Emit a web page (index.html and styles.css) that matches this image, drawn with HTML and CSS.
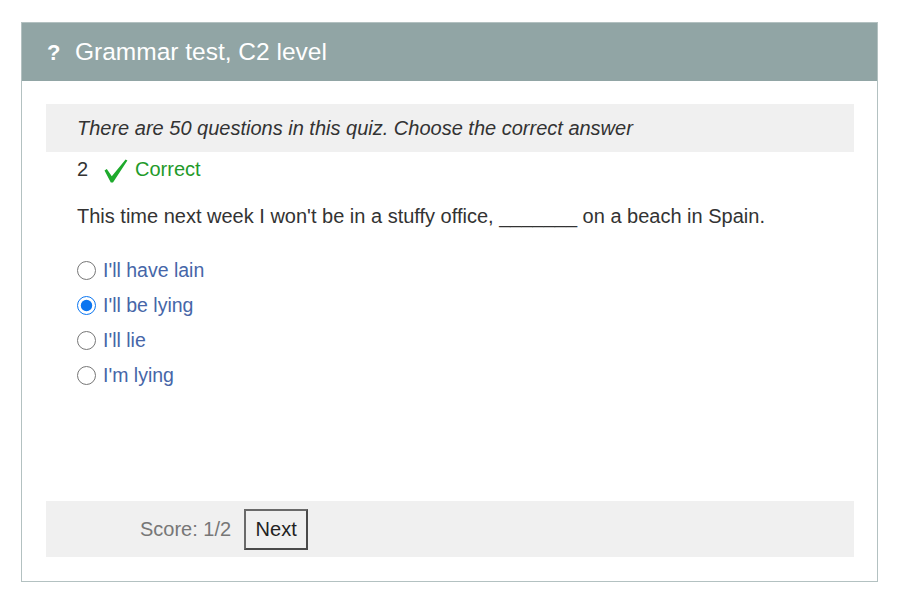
FILE: index.html
```html
<!DOCTYPE html>
<html lang="en">
<head>
<meta charset="utf-8">
<title>Grammar test, C2 level</title>
<link rel="stylesheet" href="styles.css">
</head>
<body>
<div class="card">
  <div class="card-header">
    <span class="q-icon">?</span>
    <span class="title">Grammar test, C2 level</span>
  </div>
  <div class="card-body">
    <div class="intro">There are 50 questions in this quiz. Choose the correct answer</div>
    <div class="status">
      <span class="num">2</span>
      <svg class="check" width="24" height="24" viewBox="0 0 24 24" aria-hidden="true">
        <path d="M0.5 11.5 L2.8 10 L7.8 17.2 L21.6 0.5 L23.4 1.6 L9 23.6 L6.8 23.6 Z" fill="#1eaa2c"/>
      </svg>
      <span class="correct">Correct</span>
    </div>
    <p class="question">This time next week I won't be in a stuffy office, _______ on a beach in Spain.</p>
    <div class="options">
      <label class="option"><input type="radio" name="q2"><span>I'll have lain</span></label>
      <label class="option"><input type="radio" name="q2" checked><span>I'll be lying</span></label>
      <label class="option"><input type="radio" name="q2"><span>I'll lie</span></label>
      <label class="option"><input type="radio" name="q2"><span>I'm lying</span></label>
    </div>
    <div class="spacer"></div>
    <div class="footer">
      <span class="score">Score: 1/2</span>
      <button class="next" type="button">Next</button>
    </div>
  </div>
</div>
</body>
</html>
```

FILE: styles.css
```css
html, body {
  margin: 0;
  padding: 0;
  background: #ffffff;
}

body {
  font-family: "Liberation Sans", Arial, sans-serif;
  color: #333333;
  padding: 22px 22px 0 21px;
}

.card {
  width: 857px;
  height: 560px;
  box-sizing: border-box;
  border: 1px solid #b3c1c1;
  display: flex;
  flex-direction: column;
  background: #ffffff;
}

.card-header {
  height: 58px;
  background: #91a5a5;
  display: flex;
  align-items: center;
  padding-left: 25px;
  color: #ffffff;
  flex: none;
}

.q-icon {
  font-weight: 900;
  font-size: 22px;
  width: 28px;
  line-height: 1;
  margin-top: 1px;
}

.title {
  font-size: 24.5px;
}

.card-body {
  flex: 1;
  display: flex;
  flex-direction: column;
  padding: 23px 23px 24px 24px;
}

.intro {
  height: 48px;
  background: #f0f0f0;
  display: flex;
  align-items: center;
  padding-left: 31px;
  font-style: italic;
  font-size: 20px;
  color: #333333;
  flex: none;
}

.status {
  height: 34px;
  display: flex;
  align-items: center;
  padding-left: 31px;
  font-size: 20px;
  flex: none;
}

.num {
  width: 27px;
  color: #333333;
}

.check {
  display: block;
  margin-top: 4px;
  margin-right: 7px;
}

.correct {
  color: #1f9a2a;
}

.question {
  margin: 19px 0 0 0;
  padding-left: 31px;
  font-size: 20px;
  line-height: 22px;
  color: #333333;
}

.options {
  margin-top: 26px;
  padding-left: 31px;
  display: flex;
  flex-direction: column;
}

.option {
  height: 35px;
  display: flex;
  align-items: center;
  font-size: 19.5px;
  color: #4666a8;
}

.option input {
  width: 19px;
  height: 19px;
  margin: 0 7px 0 0;
  accent-color: #0a75f0;
}

.spacer {
  flex: 1;
}

.footer {
  height: 56px;
  background: #f0f0f0;
  display: flex;
  align-items: center;
  padding-left: 94px;
  gap: 13px;
  flex: none;
}

.score {
  font-size: 20px;
  color: #777777;
}

.next {
  width: 64px;
  height: 41px;
  box-sizing: border-box;
  border: 2px solid #4a4a4a;
  border-top-color: #6a6a6a;
  border-left-color: #6a6a6a;
  background: #f0f0f0;
  font-family: "Liberation Sans", Arial, sans-serif;
  font-size: 20px;
  color: #222222;
  padding: 0;
}
```
